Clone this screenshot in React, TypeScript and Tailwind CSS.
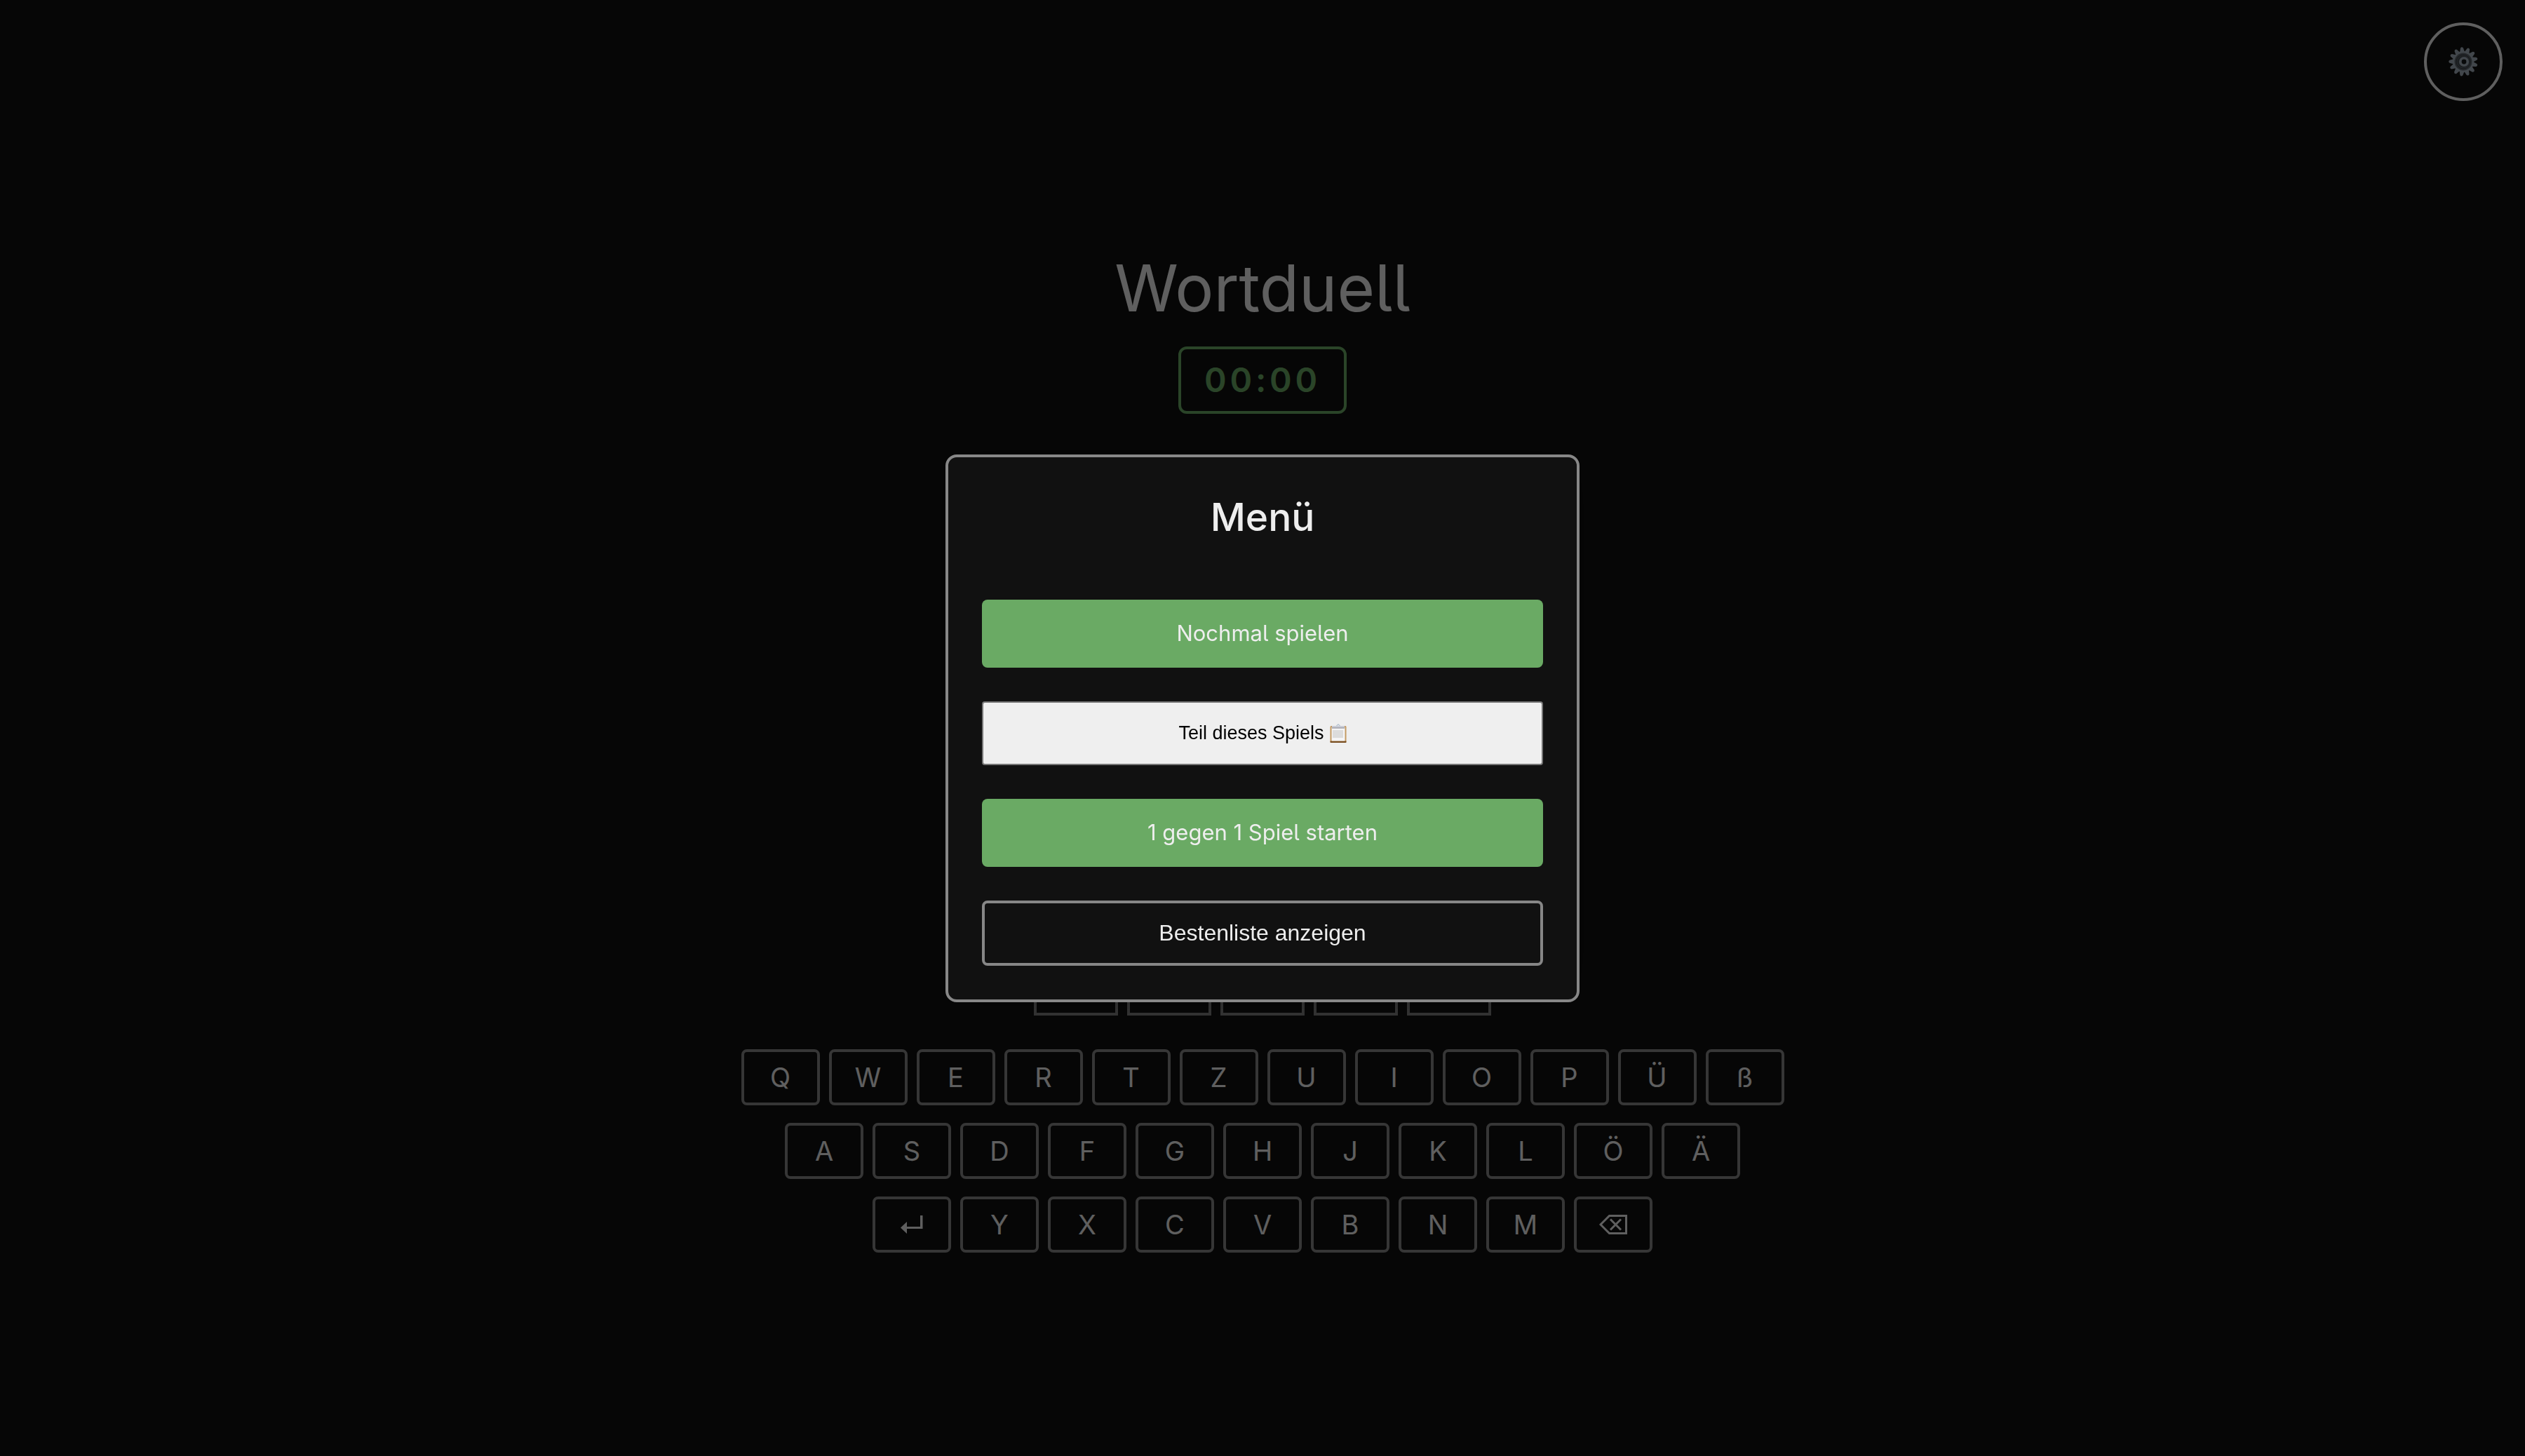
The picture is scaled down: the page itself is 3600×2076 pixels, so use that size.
import React from "react";

const ROWS: string[][] = [
  ["Q", "W", "E", "R", "T", "Z", "U", "I", "O", "P", "Ü", "ß"],
  ["A", "S", "D", "F", "G", "H", "J", "K", "L", "Ö", "Ä"],
  ["enter", "Y", "X", "C", "V", "B", "N", "M", "delete"],
];

const LABELS: Record<string, string> = { enter: "Eingabe", delete: "Löschen" };

function EnterIcon() {
  return (
    <svg viewBox="0 0 32 26" className="h-[26px] w-8" aria-hidden="true">
      <path d="M0 17.5 9 9v7h19V0h3.500v19H9v7z" fill="currentColor" />
    </svg>
  );
}

function DeleteIcon() {
  return (
    <svg viewBox="0 0 40 28" className="h-7 w-10" fill="none" stroke="currentColor" strokeWidth="3" aria-hidden="true">
      <path d="M2 14 14.500 1.500H38.500V26.500H14.500z" />
      <path d="m16 6.500 15 15m0-15-15 15" />
    </svg>
  );
}

function GearIcon() {
  const teeth = Array.from({ length: 13 }, (_, i) => (i * 360) / 13 - 6);
  return (
    <svg viewBox="-21 -21 42 42" className="h-[42px] w-[42px]" aria-hidden="true">
      {teeth.map((a) => (
        <path key={a} d="M-3.400-14 -2-19.500Q0-22 2-19.500L3.400-14z" fill="#a3b0bc" transform={`rotate(${a})`} />
      ))}
      <circle r="15" fill="#a3b0bc" />
      <circle r="12.500" fill="#5c646c" />
      <circle r="10" fill="none" stroke="#33383d" strokeWidth="1" />
      <circle r="8.500" fill="#454b51" />
      <circle cx="1" r="7" fill="#a3b0bc" />
      <circle cx="1" r="3.400" fill="#15181b" />
    </svg>
  );
}

function ClipboardIcon() {
  return (
    <svg viewBox="0 0 24 27" className="h-[27px] w-6" aria-hidden="true">
      <rect x="0.500" y="3" width="23" height="24" rx="1.500" fill="#c39a63" />
      <rect x="0.500" y="24.500" width="23" height="2.500" rx="1" fill="#7a4f22" />
      <rect x="2.500" y="5" width="19" height="19.500" fill="#f4f4f5" />
      <rect x="4" y="9" width="15" height="11" fill="#dcdcdc" />
      <path d="M3 3h18v3H3z" fill="#c9ccd6" />
      <path d="M3 5.500h18v1H3z" fill="#85858c" />
      <path d="M9.500 3 12 .800 14.500 3" fill="none" stroke="#b9c4d2" strokeWidth="1.400" />
    </svg>
  );
}

export default function App() {
  return (
    <div className="relative min-h-screen bg-[#111111] font-['Inter',sans-serif] text-[#eeeeee]">
      <button
        type="button"
        aria-label="Einstellungen"
        className="absolute top-8 right-8 flex size-28 items-center justify-center rounded-full border-4 border-[#eeeeee]"
      >
        <GearIcon />
      </button>

      <main className="flex flex-col items-center pt-[352px]">
        <h1 className="text-[92px] leading-[118px] [font-feature-settings:'cv05']">Wortduell</h1>
        <div className="mt-6 flex h-24 w-60 items-center justify-center rounded-xl border-4 border-[#6aaa64] text-5xl font-semibold tracking-widest text-[#6aaa64]">
          00:00
        </div>

        <div className="mt-[73px] grid grid-cols-5 gap-[13px]">
          {Array.from({ length: 30 }, (_, i) => (
            <div key={i} className="size-[120px] border-4 border-[#878787]" />
          ))}
        </div>

        <div className="mt-12 flex flex-col items-center gap-[25px]">
          {ROWS.map((row) => (
            <div key={row[0]} className="flex gap-[13px]">
              {row.map((key) => (
                <button
                  key={key}
                  type="button"
                  aria-label={LABELS[key]}
                  className="flex h-20 w-28 items-center justify-center rounded-lg border-4 border-[#878787] text-[38px] leading-none"
                >
                  {key === "enter" ? <EnterIcon /> : key === "delete" ? <DeleteIcon /> : key}
                </button>
              ))}
            </div>
          ))}
        </div>
      </main>

      <div className="fixed inset-0 flex items-center justify-center bg-black/60">
        <section
          role="dialog"
          aria-labelledby="menu-title"
          className="flex w-[904px] flex-col gap-12 rounded-2xl border-4 border-[#878787] bg-[#111111] px-12 pb-12 shadow-[0_0_60px_rgba(0,0,0,0.3)]"
        >
          <h2 id="menu-title" className="pt-[50px] pb-[35px] text-center text-[55px] leading-[70px] font-medium">
            Menü
          </h2>
          <button
            type="button"
            className="h-[97px] rounded-lg bg-[#6aaa64] text-[31px] [font-feature-settings:'cv05']"
          >
            Nochmal spielen
          </button>
          <button
            type="button"
            className="flex h-[91px] items-center justify-center gap-2 rounded border-2 border-[#767676] bg-[#efefef] font-['Liberation_Sans',sans-serif] text-[27px] text-black"
          >
            Teil dieses Spiels
            <ClipboardIcon />
          </button>
          <button
            type="button"
            className="h-[97px] rounded-lg bg-[#6aaa64] text-[31px] [font-feature-settings:'cv05']"
          >
            1 gegen 1 Spiel starten
          </button>
          <button
            type="button"
            className="h-[93px] rounded-lg border-4 border-[#878787] font-['Liberation_Sans',sans-serif] text-[32px]"
          >
            Bestenliste anzeigen
          </button>
        </section>
      </div>
    </div>
  );
}
